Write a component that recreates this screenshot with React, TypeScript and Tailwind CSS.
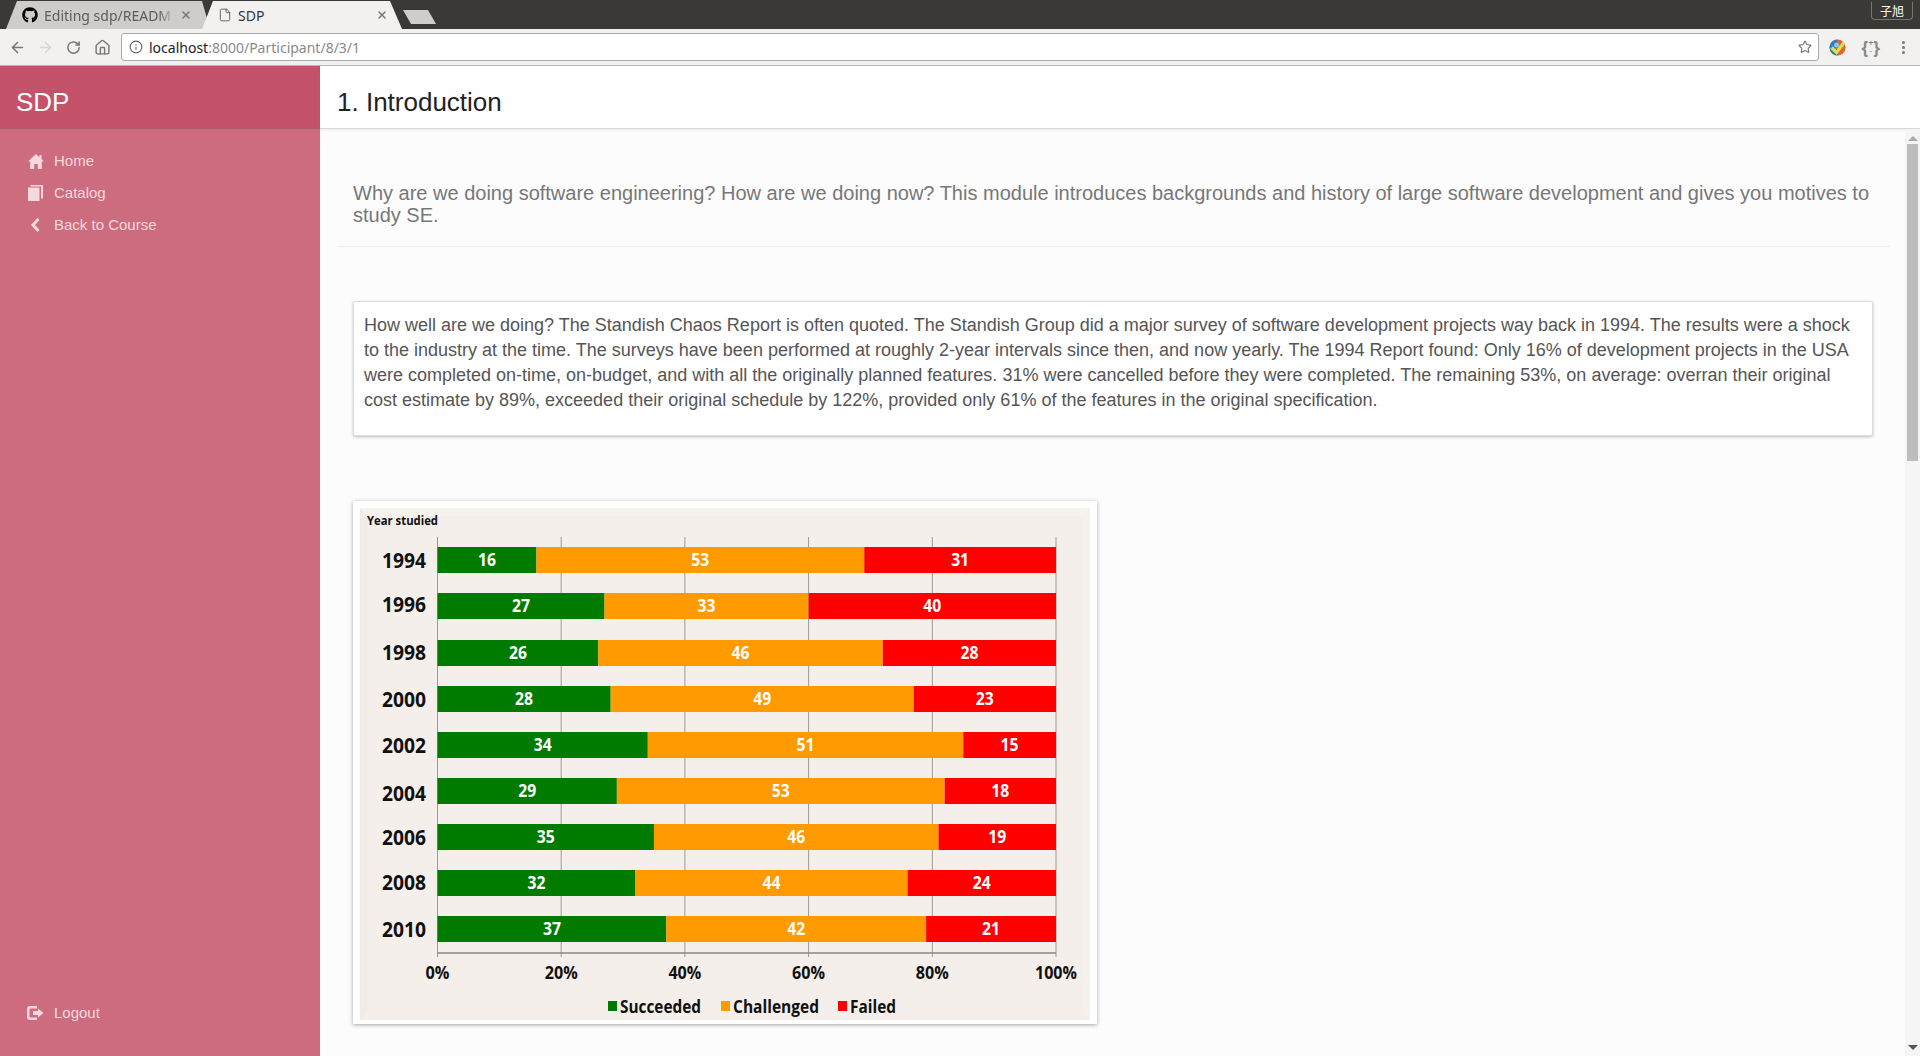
import React from "react";
import { ArrowLeft, ArrowRight, RotateCw, Home, Info, Star, X, File } from "lucide-react";
import { FaGithub } from "react-icons/fa";

const SANS = "font-['Liberation_Sans',Arial,sans-serif]";

const rows = [
  { year: "1994", y: 547, dy: 0, ok: 16, mid: 53, bad: 31 },
  { year: "1996", y: 593, dy: -2, ok: 27, mid: 33, bad: 40 },
  { year: "1998", y: 640, dy: -1, ok: 26, mid: 46, bad: 28 },
  { year: "2000", y: 686, dy: 0, ok: 28, mid: 49, bad: 23 },
  { year: "2002", y: 732, dy: 0, ok: 34, mid: 51, bad: 15 },
  { year: "2004", y: 778, dy: 2, ok: 29, mid: 53, bad: 18 },
  { year: "2006", y: 824, dy: 0, ok: 35, mid: 46, bad: 19 },
  { year: "2008", y: 870, dy: -1, ok: 32, mid: 44, bad: 24 },
  { year: "2010", y: 916, dy: 0, ok: 37, mid: 42, bad: 21 },
];

const X0 = 77.5;
const PCT = 6.185;
const TOP = 508;

const Label: React.FC<{ x: number; y: number; w: number; size: number; fill?: string; anchor?: "middle" | "end" | "start"; children: React.ReactNode }> = ({ x, y, w, size, fill = "#111", anchor = "middle", children }) => (
  <text x={x} y={y} fontSize={size} fontWeight={700} fill={fill} textAnchor={anchor} textLength={w} lengthAdjust="spacingAndGlyphs" fontFamily="'Open Sans', sans-serif">
    {children}
  </text>
);

const Chart: React.FC = () => (
  <svg width="730" height="512" viewBox="0 0 730 512" className="block">
    <rect width="730" height="512" fill="#f4efeb" />
    <path d="M0 0 L7 8 L7 504 L0 512 Z" fill="#efebe8" />
    <path d="M0 0 L7 8 L723 8 L730 0 Z" fill="#f6f2ee" />
    <path d="M730 0 L723 8 L723 504 L730 512 Z" fill="#f5f1ed" />
    <Label x={7} y={17} w={71} size={13} anchor="start">Year studied</Label>
    {[0, 20, 40, 60, 80, 100].map((p) => (
      <g key={p}>
        <line x1={X0 + p * PCT} x2={X0 + p * PCT} y1={537 - TOP} y2={957 - TOP} stroke="#999" strokeWidth="1" />
        <Label x={X0 + p * PCT} y={979 - TOP} w={p === 0 ? 24 : p === 100 ? 42 : 33} size={17}>{p}%</Label>
      </g>
    ))}
    <line x1={X0} x2={X0 + 100 * PCT} y1={953 - TOP} y2={953 - TOP} stroke="#888" strokeWidth="1.5" />
    {rows.map((r) => {
      const y = r.y - TOP;
      const midX = X0 + r.ok * PCT;
      const badX = midX + r.mid * PCT;
      return (
        <g key={r.year}>
          <Label x={66} y={y + 21 + r.dy} w={44} size={21} anchor="end">{r.year}</Label>
          <rect x={X0} y={y} width={r.ok * PCT} height={26} fill="#007b00" />
          <rect x={midX} y={y} width={r.mid * PCT} height={26} fill="#ff9a00" />
          <rect x={badX} y={y} width={r.bad * PCT} height={26} fill="#ff0000" />
          <Label x={X0 + (r.ok * PCT) / 2} y={y + 19} w={18} size={17} fill="#fff">{r.ok}</Label>
          <Label x={midX + (r.mid * PCT) / 2} y={y + 19} w={18} size={17} fill="#fff">{r.mid}</Label>
          <Label x={badX + (r.bad * PCT) / 2} y={y + 19} w={18} size={17} fill="#fff">{r.bad}</Label>
        </g>
      );
    })}
    <rect x={248} y={1001 - TOP} width={9} height={10} fill="#007b00" />
    <Label x={260} y={1013 - TOP} w={81} size={18} anchor="start">Succeeded</Label>
    <rect x={361} y={1001 - TOP} width={9} height={10} fill="#ff9a00" />
    <Label x={373} y={1013 - TOP} w={86} size={18} anchor="start">Challenged</Label>
    <rect x={478} y={1001 - TOP} width={9} height={10} fill="#ff0000" />
    <Label x={490} y={1013 - TOP} w={46} size={18} anchor="start">Failed</Label>
  </svg>
);

const HomeIcon = () => (
  <svg width="16" height="15" viewBox="0 0 16 15" fill="currentColor">
    <path d="M8 0 L11.5 3.2 V1 H13.5 V5 L16 7.5 H13.8 V15 H9.8 V10 H6.2 V15 H2.2 V7.5 H0 Z" />
  </svg>
);

const BookIcon = () => (
  <svg width="15" height="16" viewBox="0 0 15 16" fill="currentColor">
    <path d="M0 2.5 H11.5 V16 H0 Z" />
    <path d="M2.5 0 H15 V13.5 H13 V1.5 H2.5 Z" />
  </svg>
);

const BackIcon = () => (
  <svg width="11" height="14" viewBox="0 0 11 14" fill="none" stroke="currentColor" strokeWidth="3">
    <path d="M8.5 1 L3 7 L8.5 13" />
  </svg>
);

const LogoutIcon = () => (
  <svg width="17" height="14" viewBox="0 0 17 14" fill="currentColor">
    <path d="M3 0 H10 V2.5 H3.5 Q2.5 2.5 2.5 3.5 V10.5 Q2.5 11.5 3.5 11.5 H10 V14 H3 Q0 14 0 11 V3 Q0 0 3 0 Z" />
    <path d="M6 5 H11 V2.5 L16.5 7 L11 11.5 V9 H6 Z" />
  </svg>
);

const ExtensionIcon = () => (
  <svg width="17" height="17" viewBox="0 0 17 17">
    <circle cx="8.5" cy="8.5" r="8" fill="#e8622c" />
    <path d="M8.5 .5 A8 8 0 0 0 1 11 L8.5 8.5 Z" fill="#2b7fc9" />
    <path d="M1 11 A8 8 0 0 0 8.5 16.5 L10 10 Z" fill="#1e88a8" />
    <circle cx="7.5" cy="6" r="2.5" fill="#8fc3ea" />
    <path d="M2.5 8.5 L7.5 13.5 L15 3.5" fill="none" stroke="#d4e157" strokeWidth="3.2" />
  </svg>
);

const NavItem: React.FC<{ icon: React.ReactNode; label: string }> = ({ icon, label }) => (
  <div className="flex h-8 items-center">
    <span className="flex w-[17px] justify-center">{icon}</span>
    <span className="ml-[10px]">{label}</span>
  </div>
);

const BrowserChrome: React.FC = () => (
  <div className="shrink-0 font-['Noto_Sans',sans-serif]">
    <div className="flex h-[29px] items-end justify-between bg-[#3b3935] pl-[6px] pr-[7px]">
      <div className="flex items-end">
        <div className="flex h-[28px] w-[204px] items-center bg-[#cfcdcb] pl-[16px] pr-[18px] text-[14px] text-[#5c5c5c] [clip-path:polygon(0_100%,11px_0,196px_0,204px_100%)]">
          <FaGithub className="h-4 w-4 shrink-0 text-black" />
          <span className="ml-[6px] w-[132px] overflow-hidden whitespace-nowrap [mask-image:linear-gradient(to_right,black_88%,transparent)]">Editing sdp/READM</span>
          <X className="ml-[5px] h-3 w-3 shrink-0 text-[#777]" strokeWidth={3} />
        </div>
        <div className="-ml-[8px] flex h-[28px] w-[200px] items-center bg-[#f2f1f0] pl-[16px] pr-[14px] text-[14px] text-[#333] [clip-path:polygon(0_100%,11px_0,188px_0,200px_100%)]">
          <File className="h-[14px] w-[14px] shrink-0 text-[#555]" strokeWidth={1.5} />
          <span className="ml-[6px] flex-1">SDP</span>
          <X className="h-3 w-3 shrink-0 text-[#777]" strokeWidth={3} />
        </div>
        <div className="mb-[5px] ml-[1px] h-[14px] w-[33px] bg-[#cfcdcb] [clip-path:polygon(0_0,25px_0,33px_100%,8px_100%)]" />
      </div>
      <div className="mb-[9px] flex h-[18px] w-[42px] items-center justify-center self-end rounded-b-[4px] border border-t-0 border-[#77756f] font-['Noto_Sans_CJK_SC',sans-serif] text-[12px] text-white">
        子旭
      </div>
    </div>
    <div className="flex h-[37px] items-center border-b border-[#b5b5b5] bg-[#f2f1f0] pl-[9px] pr-[15px]">
      <ArrowLeft className="h-[17px] w-[17px] text-[#777]" strokeWidth={2.2} />
      <ArrowRight className="ml-[11px] h-[17px] w-[17px] text-[#d6d6d6]" strokeWidth={2.2} />
      <RotateCw className="ml-[12px] h-[15px] w-[15px] text-[#777]" strokeWidth={2.4} />
      <Home className="ml-[13px] h-[17px] w-[17px] text-[#777]" strokeWidth={2} />
      <div className="ml-[10px] flex h-[28px] flex-1 items-center rounded-[3px] border border-[#aaa] bg-white pl-[7px] pr-[6px] text-[14px]">
        <Info className="h-[14px] w-[14px] text-[#666]" strokeWidth={2} />
        <span className="ml-[6px] text-[#222]">localhost</span>
        <span className="text-[#8a8a8a]">:8000/Participant/8/3/1</span>
        <Star className="ml-auto h-[14px] w-[14px] text-[#777]" strokeWidth={2} />
      </div>
      <span className="ml-[10px]"><ExtensionIcon /></span>
      <div className="ml-[15px] flex items-center text-[17px] font-bold leading-none text-[#888]">
        <span>{"{"}</span>
        <span className="flex flex-col items-center text-[9px] leading-[8px]">
          <span>+</span>
          <span className="text-[#bbb]">-</span>
        </span>
        <span>{"}"}</span>
      </div>
      <div className="ml-[22px] flex flex-col gap-[2px]">
        <span className="h-[3px] w-[3px] rounded-full bg-[#777]" />
        <span className="h-[3px] w-[3px] rounded-full bg-[#777]" />
        <span className="h-[3px] w-[3px] rounded-full bg-[#777]" />
      </div>
    </div>
  </div>
);

const App: React.FC = () => (
  <div className={`flex h-screen flex-col overflow-hidden ${SANS}`}>
    <BrowserChrome />
    <div className="flex min-h-0 flex-1">
      <aside className="flex w-[320px] shrink-0 flex-col bg-[#cc6c7e] text-[15px] text-[#f6d9df]">
        <div className="flex h-[62px] items-center bg-[#c4526a] pl-[16px] pt-[10px] text-[26px] text-white shadow-[0_1px_1px_rgba(0,0,0,0.15)]">
          SDP
        </div>
        <div className="mt-[17px] flex flex-1 flex-col pl-[27px]">
          <NavItem icon={<HomeIcon />} label="Home" />
          <NavItem icon={<BookIcon />} label="Catalog" />
          <NavItem icon={<BackIcon />} label="Back to Course" />
          <div className="mt-auto mb-[27px]">
            <NavItem icon={<LogoutIcon />} label="Logout" />
          </div>
        </div>
      </aside>
      <main className="flex min-w-0 flex-1 flex-col bg-[#fcfcfc]">
        <div className="flex h-[63px] shrink-0 items-center border-b border-[#d8d8d8] bg-white pl-[17px] pt-[10px] text-[26px] text-[#222] shadow-[0_1px_2px_rgba(0,0,0,0.08)]">
          1. Introduction
        </div>
        <div className="flex min-h-0 flex-1">
          <div className="min-w-0 flex-1 overflow-hidden pl-[17px] pr-[15px]">
            <div className="border-b border-[#eeeeee] pb-[20px] pl-[16px] pt-[53px] text-[20px] leading-[22px] text-[#777]">
              Why are we doing software engineering? How are we doing now? This module introduces backgrounds and history of large software development and gives you motives to study SE.
            </div>
            <div className="ml-[16px] mr-[17px] mt-[54px] h-[135px] rounded-[2px] border border-[#ddd] bg-white px-[10px] py-[11px] text-[18px] leading-[25px] text-[#555] shadow-[0_1px_3px_rgba(0,0,0,0.25)]">
              How well are we doing? The Standish Chaos Report is often quoted. The Standish Group did a major survey of software development projects way back in 1994. The results were a shock to the industry at the time. The surveys have been performed at roughly 2-year intervals since then, and now yearly. The 1994 Report found: Only 16% of development projects in the USA were completed on-time, on-budget, and with all the originally planned features. 31% were cancelled before they were completed. The remaining 53%, on average: overran their original cost estimate by 89%, exceeded their original schedule by 122%, provided only 61% of the features in the original specification.
            </div>
            <div className="ml-[16px] mt-[65px] w-[744px] bg-white px-[7px] pb-[4px] pt-[7px] shadow-[0_1px_4px_rgba(0,0,0,0.35)]">
              <Chart />
            </div>
          </div>
          <div className="flex w-[15px] shrink-0 flex-col items-center bg-[#f5f5f5]">
            <div className="mt-[7px] h-0 w-0 border-x-[5px] border-b-[5px] border-x-transparent border-b-[#aaa]" />
            <div className="mt-[3px] h-[317px] w-[11px] bg-[#bdbdbd]" />
            <div className="mb-[6px] mt-auto h-0 w-0 border-x-[5px] border-t-[5px] border-x-transparent border-t-[#555]" />
          </div>
        </div>
      </main>
    </div>
  </div>
);

export default App;
